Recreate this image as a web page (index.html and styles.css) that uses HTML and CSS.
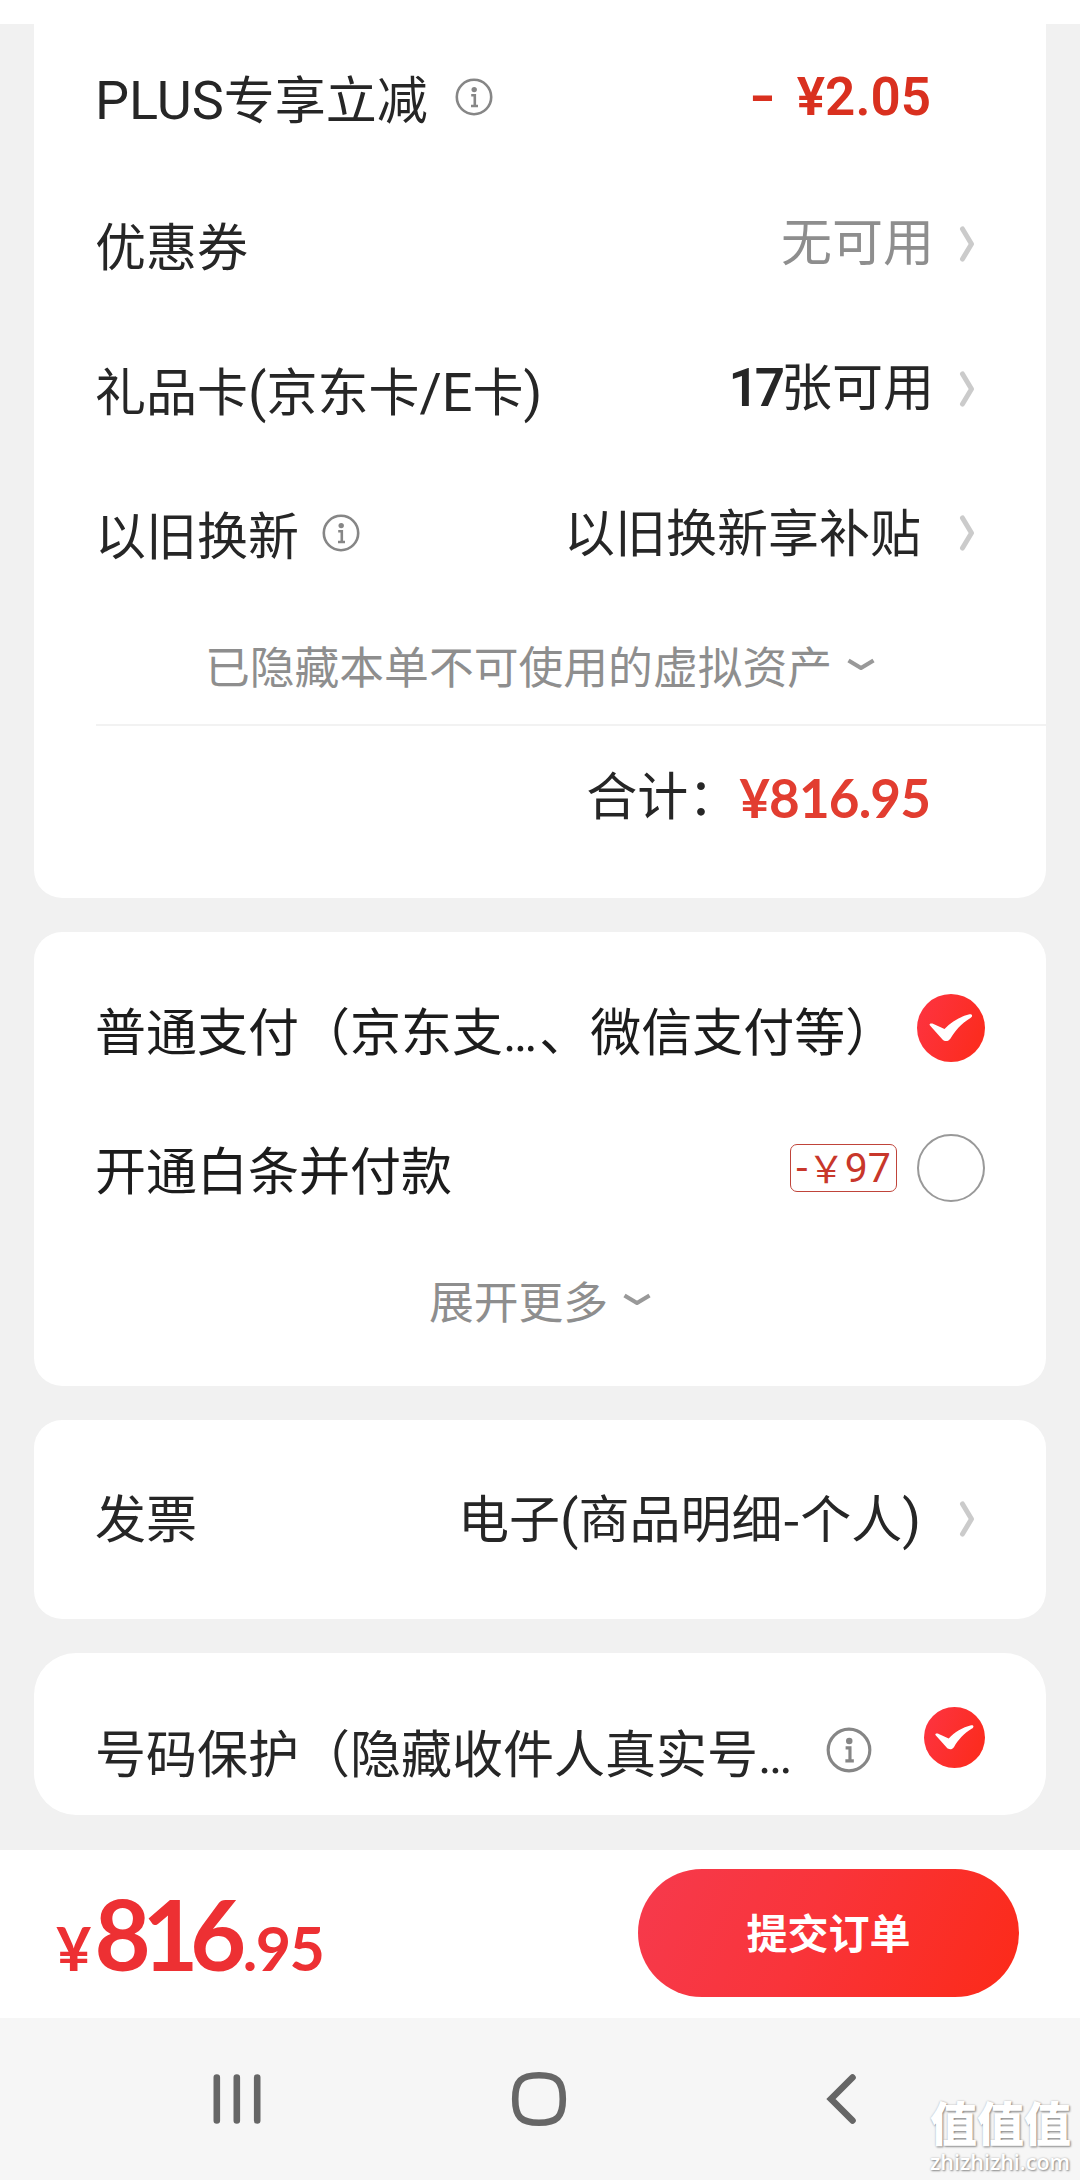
FILE: index.html
```html
<!DOCTYPE html>
<html lang="zh-CN">
<head>
<meta charset="utf-8">
<title>填写订单</title>
<link rel="stylesheet" href="styles.css">
</head>
<body>
<svg class="defs" width="0" height="0" aria-hidden="true">
  <defs>
    <linearGradient id="red" x1="0" y1="0" x2="1" y2="0.4">
      <stop offset="0" stop-color="#fd3442"/>
      <stop offset="1" stop-color="#fc2c20"/>
    </linearGradient>
    <symbol id="info" viewBox="0 0 38 38">
      <circle cx="19" cy="19" r="17.2" fill="none" stroke="#868686" stroke-width="2.6"/>
      <circle cx="19.200" cy="11.600" r="2.700" fill="#868686"/>
      <path d="M16.200 17.200h3.600v10.400M16 28h7" fill="none" stroke="#868686" stroke-width="2.600"/>
    </symbol>
    <symbol id="chev" viewBox="0 0 16 36">
      <path d="M3.500 3 L12.500 18 L3.500 33" fill="none" stroke="#cbcbcb" stroke-width="5" stroke-linecap="round" stroke-linejoin="round"/>
    </symbol>
    <symbol id="down" viewBox="0 0 28 14">
      <path d="M1.500 2.500 L14 10 L26.500 2.500" fill="none" stroke="#999" stroke-width="4.200" stroke-linejoin="round"/>
    </symbol>
    <symbol id="check" viewBox="0 0 68 68">
      <circle cx="34" cy="34" r="34" fill="url(#red)"/>
      <path d="M13 31.500 C11.500 29.500 14.500 29 16.500 30 L27.500 35 C34 28 43 22.500 52.500 20.300 C55.500 19.700 56 22.500 53.500 24 C44 29.500 38 37 33.500 44.500 C31.500 47.500 28 48 25.500 45.500 Z" fill="#fff"/>
    </symbol>
  </defs>
</svg>
<main class="page">
  <section class="card assets">
    <div class="row row-plus">
      <span class="label"><i class="latin">PLUS</i>专享立减</span>
      <svg class="info"><use href="#info"/></svg>
      <span class="value money"><b class="minus">-</b><b>¥2.05</b></span>
    </div>
    <div class="row row-coupon">
      <span class="label">优惠券</span>
      <span class="value up muted">无可用</span>
      <svg class="chev"><use href="#chev"/></svg>
    </div>
    <div class="row row-gift">
      <span class="label">礼品卡<i class="latin">(</i>京东卡<i class="latin">/E</i>卡<i class="latin">)</i></span>
      <span class="value up"><b class="count">17</b>张可用</span>
      <svg class="chev"><use href="#chev"/></svg>
    </div>
    <div class="row row-trade">
      <span class="label">以旧换新</span>
      <svg class="info"><use href="#info"/></svg>
      <span class="value up-s wide">以旧换新享补贴</span>
      <svg class="chev"><use href="#chev"/></svg>
    </div>
    <div class="more more-assets">已隐藏本单不可使用的虚拟资产<svg class="down"><use href="#down"/></svg></div>
    <div class="total"><span>合计：</span><b class="sum">¥816.95</b></div>
  </section>

  <section class="card pay">
    <div class="row">
      <span class="label low">普通支付（京东支<i class="dots">…</i>、微信支付等）</span>
      <svg class="radio"><use href="#check"/></svg>
    </div>
    <div class="row">
      <span class="label">开通白条并付款</span>
      <span class="tag">-<i class="yen">￥</i>97</span>
      <span class="radio empty"></span>
    </div>
    <div class="more more-pay">展开更多<svg class="down"><use href="#down"/></svg></div>
  </section>

  <section class="card invoice">
    <div class="row">
      <span class="label">发票</span>
      <span class="value wide">电子<i class="latin">(</i>商品明细-个人<i class="latin">)</i></span>
      <svg class="chev"><use href="#chev"/></svg>
    </div>
  </section>

  <section class="card privacy">
    <div class="row">
      <span class="label low">号码保护（隐藏收件人真实号<i class="dots">…</i></span>
      <svg class="info large"><use href="#info"/></svg>
      <svg class="radio small" viewBox="0 0 68 68"><use href="#check"/></svg>
    </div>
  </section>
</main>

<footer class="submit">
  <div class="price"><span class="cur">¥</span><span class="int">816</span><span class="dec">.95</span></div>
  <button class="btn">提交订单</button>
</footer>

<nav class="nav">
  <svg width="1080" height="162" viewBox="0 0 1080 162" fill="none" stroke="#666" stroke-width="6.600" stroke-linecap="round">
    <path d="M216.800 59.500V102.500M236.800 59.500V102.500M257.200 59.500V102.500"/>
    <path d="M539 57.300C557 57.300 562.800 63 562.800 81C562.800 99 557 104.700 539 104.700C521 104.700 515.200 99 515.200 81C515.200 63 521 57.300 539 57.300Z"/>
    <path d="M852.500 59.500L831 81L852.500 102.500"/>
  </svg>
  <div class="mark"><span class="mark-name">值值值</span><span class="mark-url">zhizhizhi.com</span></div>
</nav>
</body>
</html>
```
FILE: styles.css
```css
* { box-sizing: border-box; }
body {
  margin: 0;
  width: 1080px;
  height: 2180px;
  overflow: hidden;
  background: #fff;
  color: #262626;
  font-family: "Noto Sans CJK SC", "Noto Sans", sans-serif;
  font-size: 51px;
  line-height: 74px;
  white-space: nowrap;
}
i { font-style: normal; }
.defs { display: block; height: 0; }
.page {
  display: flex;
  flex-direction: column;
  gap: 34px;
  height: 1826px;
  margin-top: 24px;
  padding: 0 34px;
  background: #f1f1f1;
}
.card { flex: none; background: #fff; border-radius: 28px; }
.row {
  display: flex;
  align-items: center;
  height: 140px;
  padding: 0 61px;
}
.label { margin-right: auto; }
.low { padding-top: 6px; }
.latin { font-family: Roboto, sans-serif; font-size: 54px; line-height: 1; }
.chev { width: 16px; height: 36px; margin-right: 10px; margin-left: 29px; }
.info { width: 38px; height: 38px; margin-left: 27px; }
.row-trade .info { margin-left: 23px; }
.label:has(+ .info) { margin-right: 0; }
.info + .value { margin-left: auto; }
.muted { color: #8e8e8e; }
.up { padding-bottom: 11px; margin-right: -4px; }
.up-s { padding-bottom: 6px; }
.wide { margin-right: 9px; }

.assets { height: 874px; border-radius: 0 0 28px 28px; }
.row-plus { height: 145px; }
.row-coupon { height: 150px; }
.row-trade { height: 147px; }
.money {
  display: flex;
  margin-right: 54px;
  color: #d9301f;
  font-family: Roboto, sans-serif;
  font-size: 53px;
}
.money b { font-weight: 600; }
.money .minus { margin-right: 24px; transform: scaleX(1.35); }
.count { font-family: Roboto, sans-serif; font-weight: 600; font-size: 53px; letter-spacing: -4px; line-height: 1; }

.more {
  display: flex;
  align-items: center;
  justify-content: center;
  gap: 15px;
  color: #8e8e8e;
  font-size: 44.800px;
}
.down { width: 28px; height: 14px; }
.more-assets { height: 118px; }
.more-pay { height: 123px; }
.total {
  display: flex;
  align-items: center;
  justify-content: flex-end;
  height: 136px;
  margin-left: 62px;
  padding-right: 116px;
  border-top: 2px solid #f2f2f2;
}
.sum {
  color: #e23d30;
  font-family: Lato, sans-serif;
  font-size: 53px;
  letter-spacing: -0.900px;
  padding-top: 9px;
}

.pay { height: 454px; padding-top: 26px; color: #1c1c1c; }
.radio { width: 68px; height: 68px; flex: none; }
.empty { border: 2px solid #999; border-radius: 50%; }
.dots { font-family: Roboto, sans-serif; margin-right: 2px; }
.tag {
  display: flex;
  align-items: center;
  justify-content: center;
  width: 107px;
  height: 48px;
  margin-right: 20px;
  border: 1.500px solid #c0443a;
  border-radius: 7px;
  color: #c8372b;
  font-family: Roboto, sans-serif;
  font-size: 41px;
  line-height: 44px;
}
.yen { font: 37px/44px "Noto Sans CJK SC", sans-serif; margin: 0 0 3px; }

.invoice { height: 199px; padding-top: 26px; }
.invoice .chev { margin-top: 6px; }
.privacy { height: 162px; padding-top: 33px; border-radius: 42px; }
.privacy .row { height: 129px; }
.large { width: 46px; height: 46px; margin: 0 auto 2px 32px; }
.small { width: 61px; height: 61px; margin-bottom: 27px; }

.submit {
  display: flex;
  align-items: center;
  justify-content: space-between;
  height: 168px;
  padding: 0 61px 3px 56px;
  background: #fff;
}
.price {
  display: flex;
  align-items: baseline;
  padding-top: 4px;
  color: #ed3033;
  font-family: Lato, sans-serif;
  font-weight: 700;
  font-size: 61px;
}
.int { font-size: 97px; letter-spacing: -8.500px; line-height: 98px; margin-left: 3px; }
.dec { letter-spacing: -1.500px; margin-left: 5px; }
.btn {
  width: 381px;
  height: 128px;
  margin: 0;
  padding: 0 0 4px;
  border: 0;
  border-radius: 64px;
  background: linear-gradient(115deg, #f63a4d, #f9343a 45%, #fc2a18);
  color: #fff;
  font: 700 41px/60px "Noto Sans CJK SC", sans-serif;
}

.nav { position: relative; height: 162px; background: #f6f6f6; }
.nav svg { display: block; }
.mark {
  position: absolute;
  right: 8px;
  top: 77px;
  display: flex;
  flex-direction: column;
  width: 142px;
  color: #fff;
  text-shadow: 1px 1px 2px #888, 0 0 2px #bbb;
}
.mark-name { font-weight: 900; font-size: 47px; line-height: 52px; }
.mark-url { margin-top: 3px; font: 600 21.500px/24px "Open Sans", sans-serif; }
```
